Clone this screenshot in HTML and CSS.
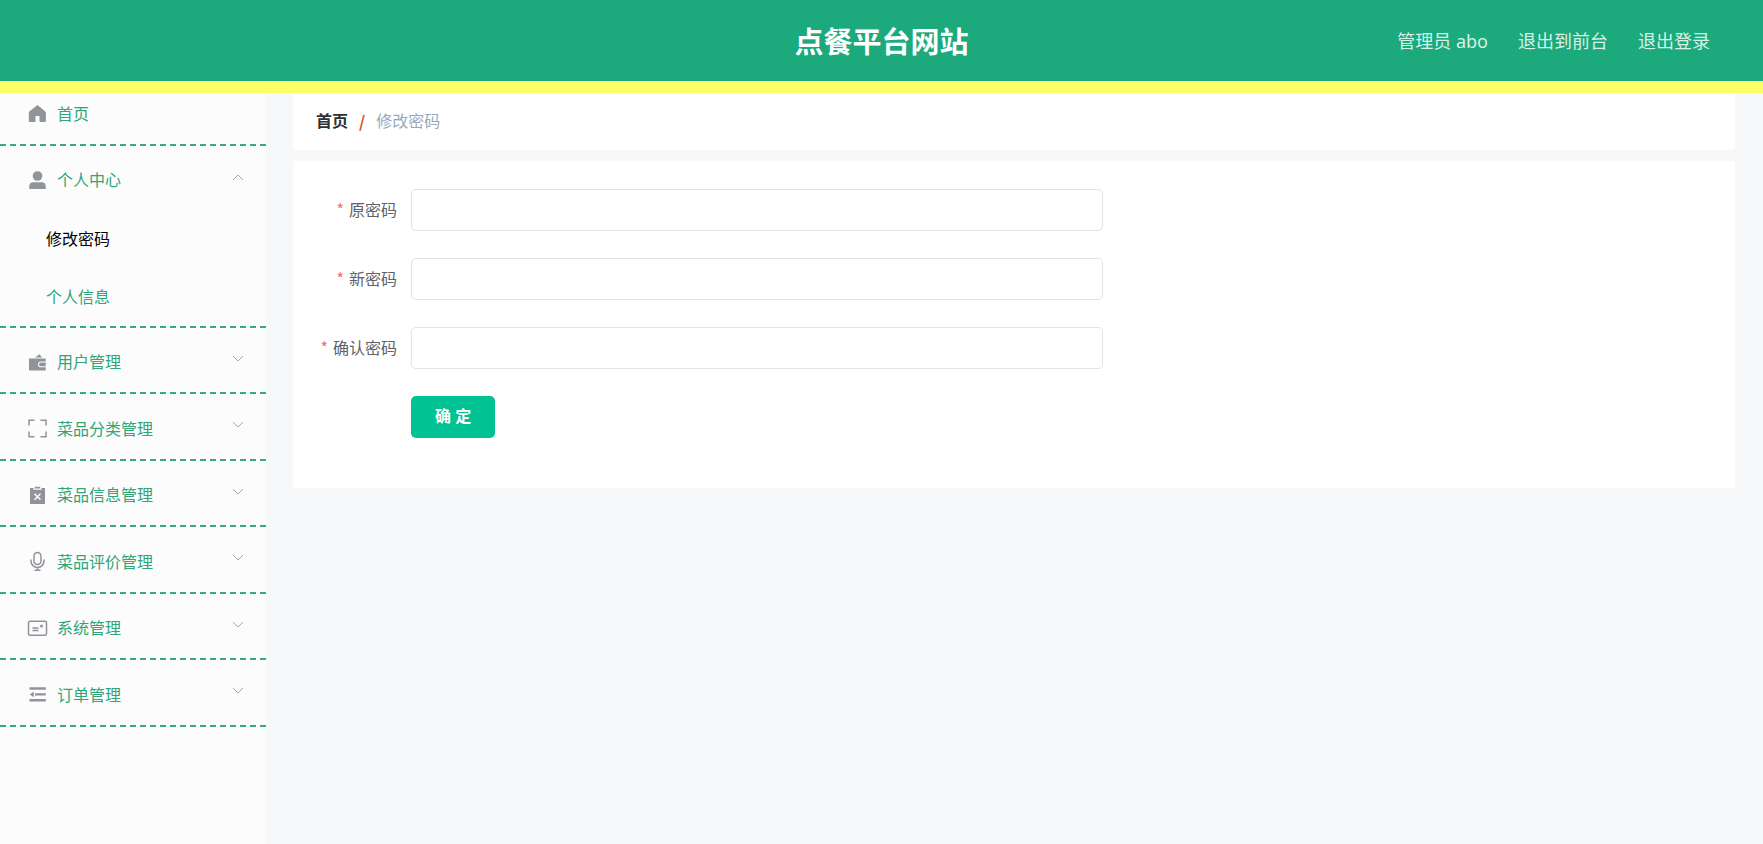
FILE: index.html
```
<!DOCTYPE html>
<html lang="zh-CN">
<head>
    <meta charset="UTF-8">
    <meta name="viewport" content="width=device-width, initial-scale=1.0">
    <title>点餐平台网站</title>
    <link rel="stylesheet" href="styles.css">
</head>
<body>
    <header class="header">
        <h1 class="title">点餐平台网站</h1>
        <div class="user-box">
            <span>管理员 abo</span>
            <a href="#">退出到前台</a>
            <a href="#">退出登录</a>
        </div>
    </header>
    <div class="container">
        <nav class="sidebar">
            <ul class="menu">
                <li class="home">
                    <a class="menu-title" href="#">
                        <svg class="icon" viewBox="0 0 21 21"><path d="M10.500 2.500L18.300 9V18.500H13V12.500H8V18.500H2.300V9Z" fill="currentColor" stroke="currentColor" stroke-width="1" stroke-linejoin="round"/></svg>
                        <span>首页</span>
                    </a>
                </li>
                <li class="opened">
                    <button class="menu-title" type="button">
                        <svg class="icon" viewBox="0 0 21 21"><circle cx="10.500" cy="6" r="4.800" fill="currentColor" stroke="none"/><path d="M2.300 19V16.300Q2.300 12.300 6.300 12.300H14.500Q18.700 12.300 18.700 16.300V19Z" fill="currentColor" stroke="none"/></svg>
                        <span>个人中心</span>
                        <svg class="arrow" viewBox="0 0 12 12"><path d="M1 9L6 4L11 9"/></svg>
                    </button>
                    <ul class="sub-menu">
                        <li><a class="active" href="#">修改密码</a></li>
                        <li><a href="#">个人信息</a></li>
                    </ul>
                </li>
                <li>
                    <button class="menu-title" type="button">
                        <svg class="icon" viewBox="0 0 21 21"><path fill="currentColor" stroke="none" fill-rule="evenodd" d="M2 6.500H18.700V9.500H14A2.900 2.900 0 0 0 14 15.300H18.700V18.500H2ZM14 10.500H18.700V14.300H14A1.900 1.900 0 0 1 14 10.500ZM8 5.500L12.500 2.300L15 5.500Z"/></svg>
                        <span>用户管理</span>
                        <svg class="arrow" viewBox="0 0 12 12"><path d="M1 3L6 8L11 3"/></svg>
                    </button>
                </li>
                <li>
                    <button class="menu-title" type="button">
                        <svg class="icon" viewBox="0 0 21 21"><path d="M2 7.500V2.300H7.500M13.500 2.300H19V7.500M19 13.500V18.700H13.500M7.500 18.700H2V13.500"/></svg>
                        <span>菜品分类管理</span>
                        <svg class="arrow" viewBox="0 0 12 12"><path d="M1 3L6 8L11 3"/></svg>
                    </button>
                </li>
                <li>
                    <button class="menu-title" type="button">
                        <svg class="icon" viewBox="0 0 21 21"><path fill="currentColor" stroke="none" d="M3 3H6.500V4.800H14.500V3H18V19H3ZM7.800 1.700H13.200V3.500H7.800Z"/><path class="cross" d="M7.500 8.800L13.500 14.800M13.500 8.800L7.500 14.800"/></svg>
                        <span>菜品信息管理</span>
                        <svg class="arrow" viewBox="0 0 12 12"><path d="M1 3L6 8L11 3"/></svg>
                    </button>
                </li>
                <li>
                    <button class="menu-title" type="button">
                        <svg class="icon" viewBox="0 0 21 21"><rect x="7" y="1.500" width="7" height="12" rx="3.500"/><path d="M4 8.500V10A6.500 6.500 0 0 0 17 10V8.500M10.500 16.500V19.300M7.500 19.300H13.500"/></svg>
                        <span>菜品评价管理</span>
                        <svg class="arrow" viewBox="0 0 12 12"><path d="M1 3L6 8L11 3"/></svg>
                    </button>
                </li>
                <li>
                    <button class="menu-title" type="button">
                        <svg class="icon" viewBox="0 0 21 21"><rect x="1.500" y="3.300" width="18" height="14" rx="1.500"/><path d="M5.500 10H11.500M5.500 12.500H11.500"/><circle cx="14.500" cy="8" r="1.500" fill="currentColor" stroke="none"/></svg>
                        <span>系统管理</span>
                        <svg class="arrow" viewBox="0 0 12 12"><path d="M1 3L6 8L11 3"/></svg>
                    </button>
                </li>
                <li>
                    <button class="menu-title" type="button">
                        <svg class="icon" viewBox="0 0 21 21"><path fill="currentColor" stroke="none" d="M2.500 3.300H18.800V5.800H2.500ZM8 9.300H18.800V11.600H8ZM2.500 15H18.800V17.500H2.500ZM6.800 7.500V13.300L2.800 10.400Z"/></svg>
                        <span>订单管理</span>
                        <svg class="arrow" viewBox="0 0 12 12"><path d="M1 3L6 8L11 3"/></svg>
                    </button>
                </li>
            </ul>
        </nav>
        <main class="main">
            <div class="breadcrumb">
                <a href="#">首页</a>
                <i>/</i>
                <span>修改密码</span>
            </div>
            <form class="form">
                <div class="form-item">
                    <label for="old-pwd">原密码</label>
                    <input id="old-pwd" type="password">
                </div>
                <div class="form-item">
                    <label for="new-pwd">新密码</label>
                    <input id="new-pwd" type="password">
                </div>
                <div class="form-item">
                    <label for="re-pwd">确认密码</label>
                    <input id="re-pwd" type="password">
                </div>
                <button class="submit" type="button">确 定</button>
            </form>
        </main>
    </div>
</body>
</html>
```
FILE: styles.css
```
*{
    margin: 0;
    padding: 0;
    box-sizing: border-box;
}
ul{
    list-style: none;
}
a{
    text-decoration: none;
    color: inherit;
}
body{
    display: flex;
    flex-direction: column;
    min-height: 100vh;
    background: #f6f8fa;
    font-family: "Noto Sans", "Noto Sans CJK SC", sans-serif;
    font-size: 16px;
    line-height: 24px;
}
button, input{
    font: inherit;
}
/* 顶部 */
.header{
    display: grid;
    grid-template-columns: 1fr auto 1fr;
    align-items: center;
    height: 93px;
    padding: 0 53px;
    background: #1ca97b;
    border-bottom: 12px solid #ffff66;
}
.title{
    grid-column: 2;
    padding-top: 2px;
    color: #fff;
    font-size: 29px;
    line-height: 40px;
}
.user-box{
    display: flex;
    justify-content: flex-end;
    gap: 30px;
    color: #d6f2e6;
    font-size: 18px;
}
.container{
    display: flex;
    flex: 1;
}
/* 左侧菜单 */
.sidebar{
    width: 266px;
    flex-shrink: 0;
    background: #fcfcfc;
}
.menu > li{
    border-bottom: 2px dashed #3ba881;
}
.menu > .home{
    padding-bottom: 10px;
}
.menu-title{
    display: flex;
    align-items: center;
    gap: 9px;
    width: 100%;
    height: 64px;
    padding: 4px 22px 0 27px;
    border: none;
    background: none;
    color: #2fa579;
    text-align: left;
    cursor: pointer;
}
.home .menu-title{
    height: 41px;
    padding-top: 0;
}
.menu > li:nth-child(2n+4) .menu-title{
    height: 65px;
}
.icon{
    width: 21px;
    height: 21px;
    fill: none;
    stroke: currentColor;
    stroke-width: 1.5;
    color: #909399;
}
.icon .cross{
    stroke: #fcfcfc;
}
.arrow{
    width: 12px;
    height: 12px;
    margin-left: auto;
    margin-bottom: 7px;
    fill: none;
    stroke: #a6a8ac;
}
.sub-menu a{
    display: block;
    height: 58px;
    padding-left: 46px;
    line-height: 58px;
    color: #2fa579;
}
.sub-menu .active{
    color: #000;
}
/* 右侧内容 */
.main{
    flex: 1;
    padding: 0 28px 0 27px;
}
.breadcrumb{
    display: flex;
    gap: 11px;
    padding: 16px 23px 17px;
    background: #fff;
    border-radius: 0 0 4px 4px;
    color: #97a8be;
}
.breadcrumb a{
    color: #303133;
    font-weight: bold;
}
.breadcrumb i{
    color: #dd4a1c;
    font-family: "Noto Sans CJK SC", sans-serif;
    font-style: normal;
    font-weight: bold;
}
.form{
    margin-top: 11px;
    padding: 28px 0 50px;
    background: #fff;
}
.form-item{
    display: flex;
    align-items: center;
    margin-bottom: 27px;
}
.form-item label{
    width: 118px;
    padding: 0 14px 2px 0;
    color: #606266;
    text-align: right;
}
.form-item label::before{
    content: "*";
    margin-right: 5px;
    color: #f56c6c;
    font-family: "Noto Sans CJK SC", sans-serif;
}
.form-item input{
    width: 48%;
    height: 42px;
    padding: 0 16px;
    border: 1px solid #dfe2e8;
    border-radius: 5px;
    background: #fff;
    outline: none;
}
.submit{
    display: block;
    height: 42px;
    margin-left: 118px;
    padding: 0 24px 2px;
    border: none;
    border-radius: 5px;
    background: #00c292;
    color: #fff;
    font-weight: bold;
    cursor: pointer;
}
```
